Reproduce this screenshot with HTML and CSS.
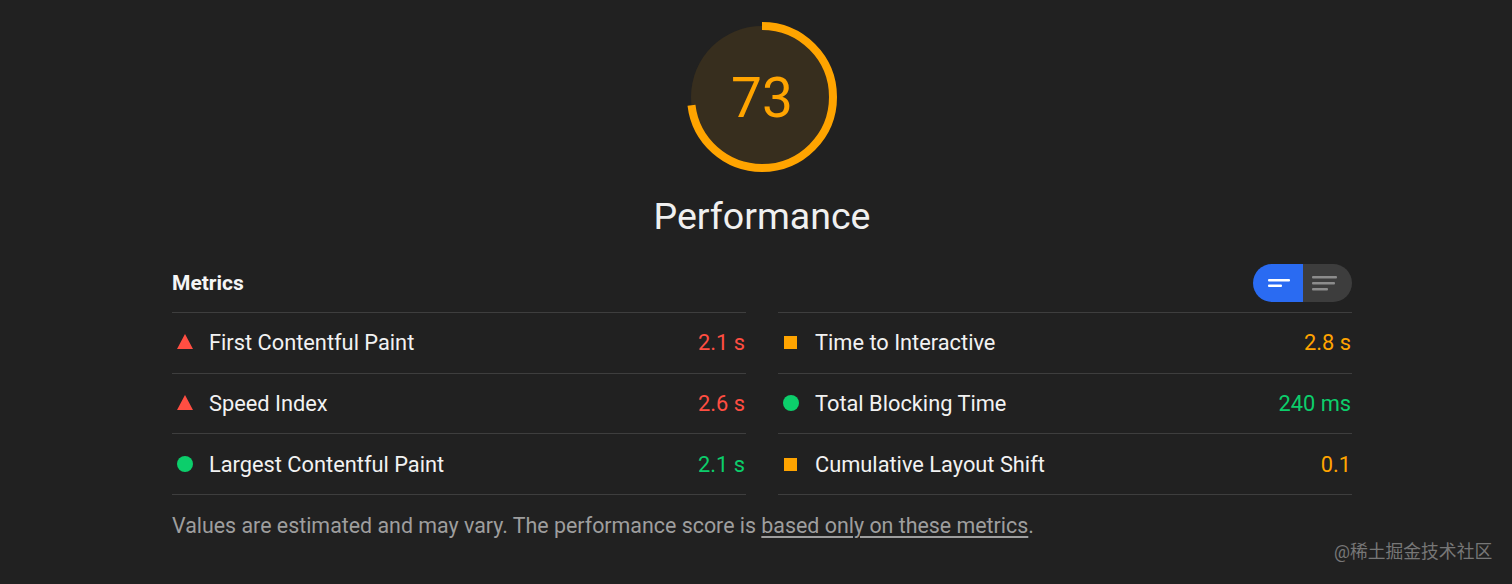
FILE: index.html
```html
<!DOCTYPE html>
<html>
<head>
<meta charset="utf-8">
<link rel="stylesheet" href="styles.css">
</head>
<body>
<div class="page">
  <div class="gauge-wrap">
    <div class="gauge">
      <svg class="gauge-svg" width="150" height="150" viewBox="0 0 150 150">
        <circle class="gauge-base" cx="75" cy="75" r="71"></circle>
        <circle class="gauge-arc" cx="75" cy="75" r="71" stroke-dasharray="325.6 1000" transform="rotate(-90 75 75)"></circle>
      </svg>
      <div class="gauge-score">73</div>
    </div>
    <div class="gauge-label">Performance</div>
  </div>

  <div class="metrics-header">
    <div class="metrics-title">Metrics</div>
    <div class="toggle">
      <div class="toggle-half toggle-on">
        <svg width="24" height="10" viewBox="0 0 24 10"><rect x="0" y="1" width="22" height="2.4" rx="1" fill="#fff"/><rect x="0" y="6.5" width="14" height="2.4" rx="1" fill="#fff"/></svg>
      </div>
      <div class="toggle-half toggle-off">
        <svg width="26" height="16" viewBox="0 0 26 16"><rect x="0" y="1" width="25" height="2.4" rx="1" fill="#8c8c8c"/><rect x="0" y="7" width="23" height="2.4" rx="1" fill="#8c8c8c"/><rect x="0" y="13" width="16" height="2.4" rx="1" fill="#8c8c8c"/></svg>
      </div>
    </div>
  </div>

  <div class="metrics">
    <div class="metric">
      <span class="icon tri"></span>
      <span class="metric-name">First Contentful Paint</span>
      <span class="metric-value fail">2.1 s</span>
    </div>
    <div class="metric">
      <span class="icon sq"></span>
      <span class="metric-name">Time to Interactive</span>
      <span class="metric-value avg">2.8 s</span>
    </div>
    <div class="metric">
      <span class="icon tri"></span>
      <span class="metric-name">Speed Index</span>
      <span class="metric-value fail">2.6 s</span>
    </div>
    <div class="metric">
      <span class="icon dot"></span>
      <span class="metric-name">Total Blocking Time</span>
      <span class="metric-value pass">240 ms</span>
    </div>
    <div class="metric last">
      <span class="icon dot"></span>
      <span class="metric-name">Largest Contentful Paint</span>
      <span class="metric-value pass">2.1 s</span>
    </div>
    <div class="metric last">
      <span class="icon sq"></span>
      <span class="metric-name">Cumulative Layout Shift</span>
      <span class="metric-value avg">0.1</span>
    </div>
  </div>

  <p class="note">Values are estimated and may vary. The performance score is <a class="note-link" href="#">based only on these metrics</a>.</p>
</div>
<div class="watermark">@稀土掘金技术社区</div>
</body>
</html>
```
FILE: styles.css
```css
html, body {
  margin: 0;
  padding: 0;
  background: #212121;
  height: 584px;
  overflow: hidden;
}
body {
  font-family: Roboto, "Noto Sans CJK SC", sans-serif;
  color: #f0f0f0;
  position: relative;
}
.page {
  width: 1180px;
  margin-left: 172px;
  padding-top: 22px;
}
.gauge-wrap {
  display: flex;
  flex-direction: column;
  align-items: center;
}
.gauge {
  position: relative;
  width: 150px;
  height: 150px;
}
.gauge-svg {
  display: block;
}
.gauge-base {
  fill: #372e1e;
  stroke: none;
}
.gauge-arc {
  fill: none;
  stroke: #ffa400;
  stroke-width: 8;
  stroke-linecap: butt;
}
.gauge-score {
  position: absolute;
  inset: 0;
  display: flex;
  align-items: center;
  justify-content: center;
  font-size: 55px;
  color: #ffa400;
  line-height: 1;
  padding-top: 2px;
}
.gauge-label {
  font-size: 37.5px;
  color: #f0f0f0;
  margin-top: 22px;
  line-height: 44px;
}
.metrics-header {
  display: flex;
  align-items: center;
  justify-content: space-between;
  margin-top: 26px;
  height: 38px;
  margin-bottom: 10px;
}
.metrics-title {
  font-size: 21px;
  font-weight: 700;
  color: #f5f5f5;
}
.toggle {
  display: flex;
  height: 38px;
  border-radius: 19px;
  overflow: hidden;
}
.toggle-half {
  box-sizing: border-box;
  display: flex;
  align-items: center;
  justify-content: center;
}
.toggle-on {
  width: 50px;
  background: #2a6bf2;
  padding-left: 4px;
}
.toggle-off {
  width: 49px;
  background: #3d3d3d;
  padding-right: 6px;
}
.metrics {
  display: grid;
  grid-template-columns: 1fr 1fr;
  column-gap: 32px;
}
.metric {
  display: flex;
  align-items: center;
  height: 60.5px;
  box-sizing: border-box;
  border-top: 1.5px solid #3e3e3e;
  font-size: 21.8px;
}
.metric.last {
  border-bottom: 1.5px solid #3e3e3e;
  height: 62px;
}
.icon {
  width: 16px;
  height: 16px;
  margin-left: 5px;
  margin-right: 16px;
  display: flex;
  align-items: center;
  justify-content: center;
  flex: none;
}
.tri {
  width: 0;
  height: 0;
  border-left: 8px solid transparent;
  border-right: 8px solid transparent;
  border-bottom: 15px solid #ff4e42;
  margin-top: -2px;
}
.sq {
  width: 13px;
  height: 13px;
  background: #ffa400;
  margin-left: 6px;
  margin-right: 18px;
}
.dot {
  width: 16px;
  height: 16px;
  border-radius: 50%;
  background: #0cce6b;
}
.metric-name {
  flex: 1;
  color: #f2f2f2;
}
.metric-value {
  margin-right: 1px;
}
.fail { color: #ff4e42; }
.avg { color: #ffa400; }
.pass { color: #0cce6b; }
.note {
  margin: 18px 0 0 0;
  font-size: 21.4px;
  color: #9e9e9e;
}
.note-link {
  color: #9e9e9e;
  text-decoration: underline;
  text-underline-offset: 3px;
}
.watermark {
  position: absolute;
  left: 1334px;
  top: 537px;
  font-size: 17.8px;
  color: #777;
}
```
